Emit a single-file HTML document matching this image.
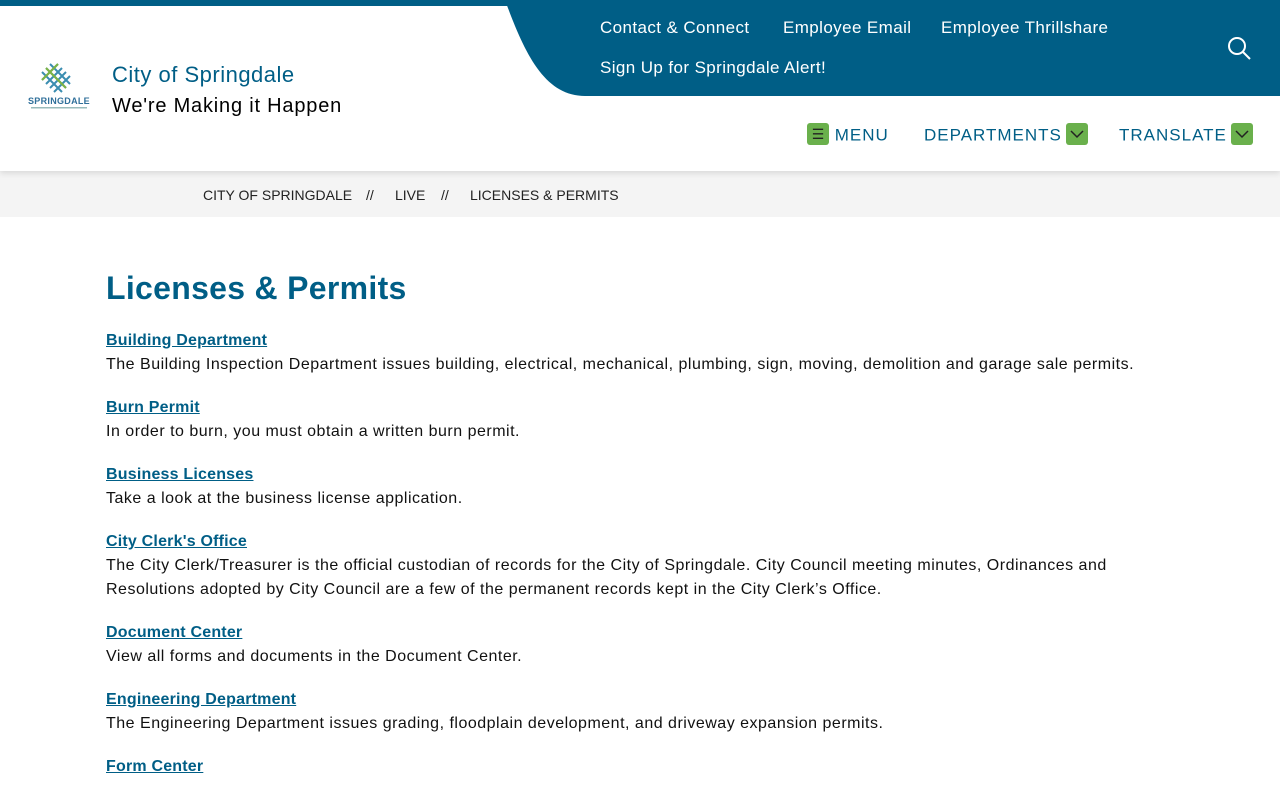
<!DOCTYPE html>
<html><head><meta charset="utf-8"><style>
body{margin:0;width:1280px;height:800px;overflow:hidden;background:#fff;font-family:"Liberation Sans",sans-serif;color:#111;position:relative}
.hdr{position:absolute;left:0;top:0;width:1280px;height:171px;box-shadow:0 2px 6px rgba(0,0,0,.12);background:#fff;z-index:2}
.top a{position:absolute;color:#fff;font-size:17px;text-decoration:none;white-space:nowrap;letter-spacing:0.4px}
.t1{position:absolute;left:112px;top:62px;font-size:22px;color:#005e86;letter-spacing:0.5px}
.t2{position:absolute;left:112px;top:95px;font-size:20px;color:#000;letter-spacing:0.8px}
.nav{position:absolute;top:125px;font-size:17px;color:#005e86;letter-spacing:1px;white-space:nowrap}
.gb{display:inline-block;width:22px;height:22px;background:#6ab04c;border-radius:3px;vertical-align:middle;position:relative;top:-2px}
.bc{position:absolute;top:171px;left:0;width:1280px;height:46px;background:#f4f4f4}
.bc span{position:absolute;top:16px;font-size:14px;color:#222}
.main{position:absolute;left:106px;top:268px;width:1060px}
h1{margin:0 0 21px;font-size:32px;color:#005e86;line-height:40px;letter-spacing:0.3px}
.it{margin-bottom:19px;font-size:16px;line-height:24px;letter-spacing:0.5px}
.it a{color:#005e86;font-weight:bold;text-decoration:underline;letter-spacing:0.2px}
</style></head><body>
<div class="hdr">
<svg width="1280" height="96" style="position:absolute;left:0;top:0">
<rect x="0" y="0" width="1280" height="6" fill="#005e86"/>
<path d="M505 0 C 525 55, 545 96, 585 96 L1280 96 L1280 0 Z" fill="#005e86"/>
</svg>
<div class="top">
<a style="left:600px;top:18px">Contact &amp; Connect</a>
<a style="left:783px;top:18px">Employee Email</a>
<a style="left:941px;top:18px">Employee Thrillshare</a>
<a style="left:600px;top:58px">Sign Up for Springdale Alert!</a>
</div>
<svg width="28" height="28" style="position:absolute;left:1226px;top:35px" fill="none" stroke="#fff" stroke-width="2"><circle cx="11" cy="11" r="8"/><path d="M17 17l7 7"/></svg>
<svg width="72" height="50" style="position:absolute;left:23px;top:62px">
<g stroke-width="2" fill="none">
<path d="M27 2l20 20M23 6l20 20M19 10l20 20M35 2l-16 16M39 6l-16 16M43 10l-16 16M47 14l-16 16" stroke="#3a8db0"/>
<path d="M23 6l20 20M35 2l-16 16" stroke="#7cb342"/>
</g>
<text x="36" y="42" font-size="9" font-weight="bold" fill="#2f6f9a" text-anchor="middle" font-family="Liberation Sans" letter-spacing="0.3">SPRINGDALE</text>
<rect x="8" y="45" width="56" height="1.5" fill="#9bb"/>
</svg>
<div class="t1">City of Springdale</div>
<div class="t2">We're Making it Happen</div>
<div class="nav" style="left:807px"><span class="gb" style="text-align:center;line-height:22px;color:#222;font-size:14px;letter-spacing:0">☰</span> MENU</div>
<div class="nav" style="left:924px">DEPARTMENTS<span class="gb" style="margin-left:4px"><svg width="22" height="22" fill="none" stroke="#222" stroke-width="1.5"><path d="M5 8l6 6 6-6"/></svg></span></div>
<div class="nav" style="left:1119px">TRANSLATE<span class="gb" style="margin-left:4px"><svg width="22" height="22" fill="none" stroke="#222" stroke-width="1.5"><path d="M5 8l6 6 6-6"/></svg></span></div>
</div>
<div class="bc">
<span style="left:203px">CITY OF SPRINGDALE</span><span style="left:366px">//</span><span style="left:395px">LIVE</span><span style="left:441px">//</span><span style="left:470px">LICENSES &amp; PERMITS</span>
</div>
<div class="main">
<h1>Licenses &amp; Permits</h1>
<div class="it"><a>Building Department</a><br>The Building Inspection Department issues building, electrical, mechanical, plumbing, sign, moving, demolition and garage sale permits.</div>
<div class="it"><a>Burn Permit</a><br>In order to burn, you must obtain a written burn permit.</div>
<div class="it"><a>Business Licenses</a><br>Take a look at the business license application.</div>
<div class="it"><a>City Clerk's Office</a><br>The City Clerk/Treasurer is the official custodian of records for the City of Springdale. City Council meeting minutes, Ordinances and<br>Resolutions adopted by City Council are a few of the permanent records kept in the City Clerk’s Office.</div>
<div class="it"><a>Document Center</a><br>View all forms and documents in the Document Center.</div>
<div class="it"><a>Engineering Department</a><br>The Engineering Department issues grading, floodplain development, and driveway expansion permits.</div>
<div class="it"><a>Form Center</a></div>
</div>
</body></html>
